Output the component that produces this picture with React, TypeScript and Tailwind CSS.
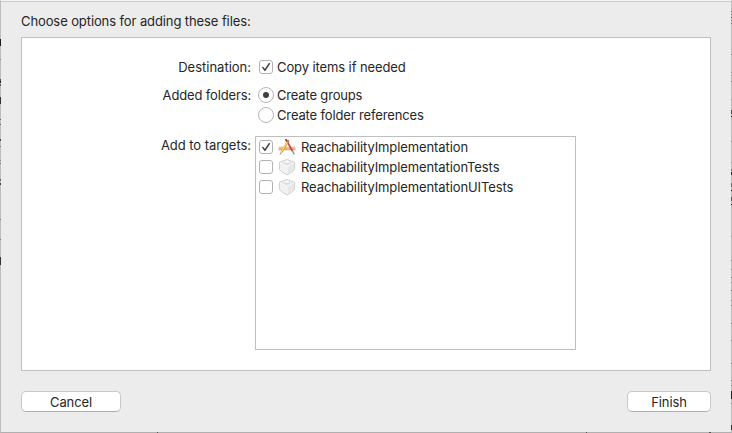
import type { ReactNode } from 'react';

type Speck = [top: number, height: number, color: string];

const leftSpecks: Speck[] = [
  [39, 7, '#1c1c1c'], [59, 1, '#888'], [79, 2, '#555'], [81, 2, '#222'], [84, 2, '#555'],
  [97, 7, '#333'], [119, 1, '#666'], [124, 1, '#666'], [139, 2, '#444'], [146, 1, '#777'],
  [160, 1, '#888'], [163, 1, '#777'], [179, 2, '#666'], [183, 2, '#444'], [219, 1, '#777'],
  [239, 1, '#777'], [257, 8, '#333'],
];

const rightSpecks: Speck[] = [
  [11, 1, '#777'], [14, 1, '#666'], [17, 1, '#555'], [20, 1, '#777'], [23, 1, '#666'],
  [54, 1, '#777'], [72, 1, '#888'], [75, 1, '#999'], [81, 1, '#888'], [99, 1, '#999'],
  [110, 4, '#444'], [116, 1, '#111'], [141, 1, '#888'], [162, 1, '#999'], [169, 2, '#777'],
  [172, 3, '#222'], [183, 4, '#666'], [190, 1, '#111'], [197, 4, '#555'], [204, 1, '#111'],
  [236, 1, '#999'], [260, 1, '#888'], [269, 1, '#888'], [277, 1, '#777'], [282, 1, '#888'],
  [290, 1, '#555'], [300, 1, '#888'], [305, 1, '#888'], [323, 1, '#777'], [340, 1, '#888'],
  [363, 1, '#777'], [380, 1, '#777'], [385, 1, '#888'], [391, 8, '#222'], [403, 1, '#888'],
  [425, 5, '#333'],
];

function Edge({ specks, side }: { specks: Speck[]; side: string }) {
  return (
    <div className={`absolute top-0 bottom-0 w-px ${side}`}>
      {specks.map(([top, height, color]) => (
        <span key={top} className="absolute left-0 w-px" style={{ top, height, background: color }} />
      ))}
    </div>
  );
}

function Checkbox({ checked = false }: { checked?: boolean }) {
  return (
    <span className="block size-[14px] shrink-0 rounded-[3px] border border-[#b2b2b2] bg-white">
      {checked && (
        <svg viewBox="0 0 12 12" className="size-3" fill="none" stroke="#3a3a3a" strokeWidth="1.5" strokeLinecap="round" strokeLinejoin="round">
          <path d="M2.9 6.6 5 9.2 9.3 2.7" />
        </svg>
      )}
    </span>
  );
}

function Radio({ checked = false }: { checked?: boolean }) {
  return (
    <span className="flex size-4 shrink-0 items-center justify-center rounded-full border border-[#b5b5b5] bg-white">
      {checked && <span className="size-1.5 rounded-full bg-[#3f3f3f]" />}
    </span>
  );
}

function AppIcon() {
  return (
    <svg viewBox="0 0 18 18" className="size-[18px] shrink-0">
      <rect x=".7" y="8.8" width="16.6" height="3.2" rx=".3" fill="#efae82" />
      <path d="M.7 9.2h16.6" stroke="#f6cfb4" strokeWidth=".7" />
      <path d="M.7 11.9h16.6" stroke="#dc9a6d" strokeWidth=".6" />
      <path d="M8.6 2.4 14.4 13" stroke="#c0453f" strokeWidth="1.6" />
      <path d="M7.6 1.1 9.6 4.6" stroke="#b32f30" strokeWidth="1.9" />
      <path d="m14.2 12.6 2.2 3.8" stroke="#9c9592" strokeWidth="1.4" />
      <path d="m9.6 4-6 10" stroke="#c98a25" strokeWidth="2.2" />
      <path d="m9.4 3.9-6 10" stroke="#ffe65c" strokeWidth="1.1" />
      <path d="m10.6 2.3-1 1.8" stroke="#cf6158" strokeWidth="2" />
      <path d="m2.5 13.4 1.9 1.1-2.5 2.2Z" fill="#cdb29a" />
      <path d="m2 15.6-.2 1.2 1.1-.8Z" fill="#555" />
    </svg>
  );
}

function TestIcon() {
  return (
    <svg viewBox="0 0 18 18" className="size-[18px] shrink-0" strokeLinejoin="round">
      <path d="m9 1.5 7.6 2.8v7.2Q13 15.2 9 16.9 5 15.2 1.4 11.5V4.3Z" fill="#f1f1f1" stroke="#c9c9c9" strokeWidth=".9" />
      <path d="m2.2 4.8 6.8-2.5 6.8 2.5L9 8.8Z" fill="#eaeaea" />
      <path d="M9 8.8 15.8 5v6.2Q12.600 14.400 9 16.100Z" fill="#e7e7e7" />
      <path d="m2.2 4.9 6.8 4 6.800-4M9 8.900v7.100" fill="none" stroke="#fff" strokeWidth=".7" />
      <path d="M6.300 3.800v1.600Q9 7.400 11.700 5.400V3.800Z" fill="#d9d9d9" />
      <ellipse cx="9" cy="3.900" rx="2.700" ry="1.100" fill="#f8f8f8" />
    </svg>
  );
}

function Target({ name, checked, icon }: { name: ReactNode; checked?: boolean; icon: ReactNode }) {
  return (
    <div className="flex h-5 items-center pl-[3px]">
      <Checkbox checked={checked} />
      <span className="ml-[5px] flex">{icon}</span>
      <span className="ml-[5px]">{name}</span>
    </div>
  );
}

export default function App() {
  return (
    <div className="relative h-[433px] w-[732px] overflow-hidden">
      <main className="flex h-full flex-col border-x border-t border-b border-x-[#bdbdbd] border-t-[#f3f3f3] border-b-[#b0b0b0] bg-[#ececec] font-['Inter','Liberation_Sans',sans-serif] text-[13px] leading-4 tracking-[-0.1px] whitespace-nowrap text-[#262626]">
        <div className="h-px shrink-0 bg-[#cbcbcb]" />
        <h1 className="mt-[11px] ml-5 h-4 font-normal tracking-[-0.1px]">Choose options for adding these files:</h1>
        <section className="mx-5 mt-2 h-[334px] shrink-0 border border-[#bfbfbf] bg-white">
          <div className="mt-[21px] flex h-4 items-center">
            <span className="w-[229px] text-right tracking-normal">Destination:</span>
            <span className="ml-2 flex items-center gap-[4px]"><Checkbox checked /><span>Copy items if needed</span></span>
          </div>
          <div className="mt-3 flex h-4 items-center">
            <span className="w-[229px] text-right tracking-[-0.15px]">Added folders:</span>
            <span className="ml-[7px] flex items-center gap-[3px]"><Radio checked /><span className="tracking-[-0.17px]">Create groups</span></span>
          </div>
          <div className="mt-1 ml-[236px] flex h-4 items-center gap-[3px]"><Radio /><span className="tracking-[-0.14px]">Create folder references</span></div>
          <div className="mt-[13px] flex">
            <span className="w-[229px] pt-px text-right tracking-[-0.04px]">Add to targets:</span>
            <div className="ml-1 h-[214px] w-[321px] border border-[#bfbfbf] bg-white">
              <Target checked icon={<AppIcon />} name="ReachabilityImplementation" />
              <Target icon={<TestIcon />} name="ReachabilityImplementationTests" />
              <Target icon={<TestIcon />} name="ReachabilityImplementationUITests" />
            </div>
          </div>
        </section>
        <footer className="mx-5 mt-5 flex justify-between">
          <button className="h-[21px] w-[100px] rounded-[5px] border border-[#c8c8c8] border-b-[#acacac] bg-white">Cancel</button>
          <button className="h-[21px] w-[84px] rounded-[5px] border border-[#c8c8c8] border-b-[#acacac] bg-white">Finish</button>
        </footer>
      </main>
      <Edge specks={leftSpecks} side="left-0" />
      <Edge specks={rightSpecks} side="right-0" />
      <span className="absolute bottom-0 left-[157px] size-px bg-[#555]" />
      <span className="absolute bottom-0 left-[586px] size-px bg-[#555]" />
      <span className="absolute bottom-0 left-[709px] h-px w-0.5 bg-[#555]" />
    </div>
  );
}
